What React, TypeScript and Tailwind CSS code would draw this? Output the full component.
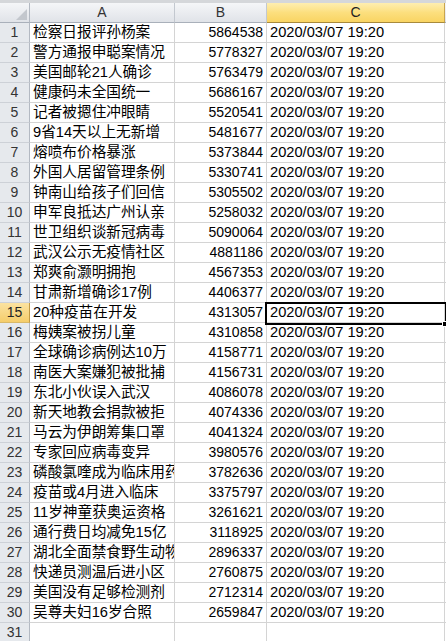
const rows: [string, number][] = [
    ["检察日报评孙杨案", 5864538],
    ["警方通报申聪案情况", 5778327],
    ["美国邮轮21人确诊", 5763479],
    ["健康码未全国统一", 5686167],
    ["记者被摁住冲眼睛", 5520541],
    ["9省14天以上无新增", 5481677],
    ["熔喷布价格暴涨", 5373844],
    ["外国人居留管理条例", 5330741],
    ["钟南山给孩子们回信", 5305502],
    ["申军良抵达广州认亲", 5258032],
    ["世卫组织谈新冠病毒", 5090064],
    ["武汉公示无疫情社区", 4881186],
    ["郑爽俞灏明拥抱", 4567353],
    ["甘肃新增确诊17例", 4406377],
    ["20种疫苗在开发", 4313057],
    ["梅姨案被拐儿童", 4310858],
    ["全球确诊病例达10万", 4158771],
    ["南医大案嫌犯被批捕", 4156731],
    ["东北小伙误入武汉", 4086078],
    ["新天地教会捐款被拒", 4074336],
    ["马云为伊朗筹集口罩", 4041324],
    ["专家回应病毒变异", 3980576],
    ["磷酸氯喹成为临床用药", 3782636],
    ["疫苗或4月进入临床", 3375797],
    ["11岁神童获奥运资格", 3261621],
    ["通行费日均减免15亿", 3118925],
    ["湖北全面禁食野生动物", 2896337],
    ["快递员测温后进小区", 2760875],
    ["美国没有足够检测剂", 2712314],
    ["吴尊夫妇16岁合照", 2659847],
]

const SELECTED = 15

function RowHeader({ n }: { n: number }) {
    const active = n == SELECTED
    return <div className={`w-[30px] shrink-0 h-full flex items-center justify-center border-r border-b text-[14px] ${
        active ? "bg-gradient-to-b from-[#fbe2a0] to-[#f5cd6a] border-r-[#c29a44] border-b-[#d9b968] text-[#222]" : "bg-[#e6e9ed] border-r-[#b3b9c2] border-b-[#cdd1d7] text-[#333]"
    }`}>
        { n }
    </div>
}

export default function App() {
    return <div className="relative w-[446px] h-[641px] overflow-hidden bg-white font-['Liberation_Sans','Noto_Sans_CJK_SC',sans-serif] text-black">
        <div className="h-[3px] bg-[#d5d7da]" />

        {/* column headers */}
        <section className="flex h-[20px] text-[14px] text-[#333]">
            <div className="w-[30px] shrink-0 h-full relative bg-gradient-to-b from-[#f5f6f8] to-[#e0e3e8] border-r border-b border-r-[#b3b9c2] border-b-[#a9b0ba]">
                <svg className="absolute right-[2px] bottom-[2px]" width="11" height="11" viewBox="0 0 11 11">
                    <polygon points="11,0 11,11 0,11" fill="#c3c7cd" />
                </svg>
            </div>
            <div className="w-[145px] shrink-0 h-full flex items-center justify-center bg-gradient-to-b from-[#f5f6f8] to-[#e0e3e8] border-r border-b border-r-[#c3c8cf] border-b-[#a9b0ba]">A</div>
            <div className="w-[92px] shrink-0 h-full flex items-center justify-center bg-gradient-to-b from-[#f5f6f8] to-[#e0e3e8] border-r border-b border-r-[#c3c8cf] border-b-[#a9b0ba]">B</div>
            <div className="w-[178px] shrink-0 h-full flex items-center justify-center bg-gradient-to-b from-[#feeeb0] via-[#fcdf7e] to-[#f9d462] border-r border-b border-r-[#c9a54e] border-b-[#a88a3c] text-[#222]">C</div>
            <div className="flex-1 h-full bg-gradient-to-b from-[#f5f6f8] to-[#e0e3e8] border-b border-b-[#a9b0ba]" />
        </section>

        {
            rows.map(([title, count], i) => {
                return <div key={ i } className="flex h-[20px]">
                    <RowHeader n={ i + 1 } />
                    <div className="w-[145px] shrink-0 h-full border-r border-b border-[#d4d4d4] pl-[3px] overflow-hidden whitespace-nowrap text-[14.67px] leading-[19px]">
                        { title }
                    </div>
                    <div className="w-[92px] shrink-0 h-full border-r border-b border-[#d4d4d4] pr-[3px] text-right text-[14px] leading-[19px]">
                        { count }
                    </div>
                    <div className="w-[178px] shrink-0 h-full border-r border-b border-[#d4d4d4] pl-[3px] whitespace-nowrap text-[14.67px] leading-[19px]">
                        2020/03/07 19:20
                    </div>
                    <div className="flex-1 h-full border-b border-[#d4d4d4]" />
                </div>
            })
        }

        <div className="flex h-[20px]">
            <RowHeader n={ 31 } />
            <div className="w-[145px] shrink-0 h-full border-r border-b border-[#d4d4d4]" />
            <div className="w-[92px] shrink-0 h-full border-r border-b border-[#d4d4d4]" />
            <div className="w-[178px] shrink-0 h-full border-r border-b border-[#d4d4d4]" />
            <div className="flex-1 h-full border-b border-[#d4d4d4]" />
        </div>

        {/* active cell C15 */}
        <div className="absolute left-[265px] top-[302px] w-[182px] h-[23px] border-2 border-black pointer-events-none" />
        <div className="absolute left-[442px] top-[321px] w-[6px] h-[6px] bg-black border border-white pointer-events-none" />
    </div>
}
